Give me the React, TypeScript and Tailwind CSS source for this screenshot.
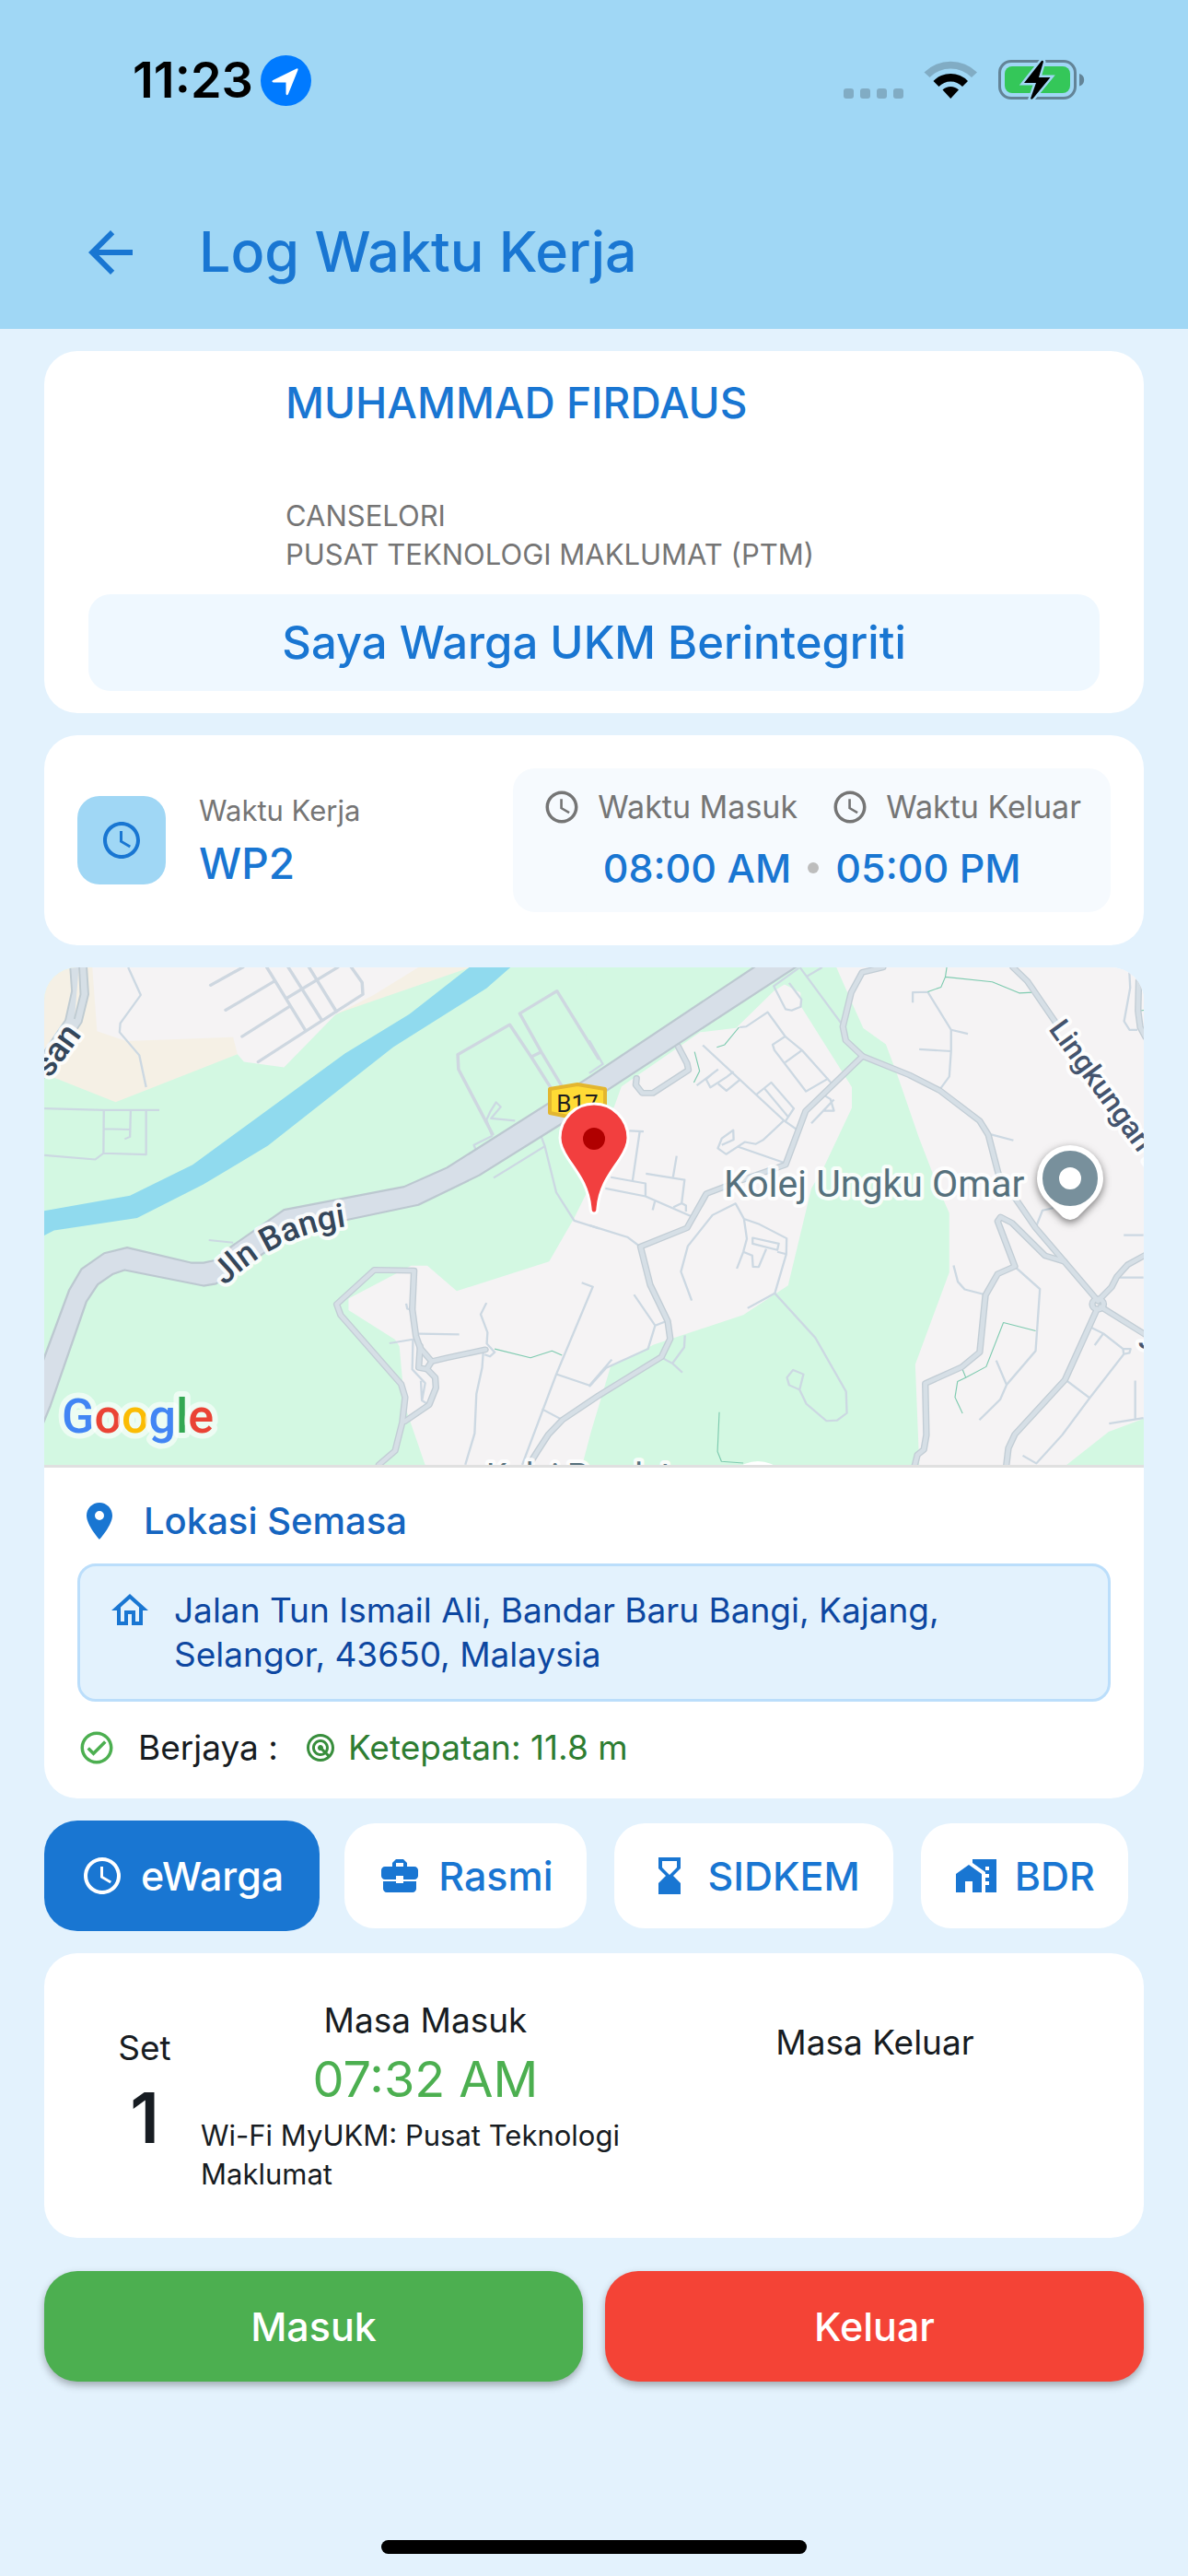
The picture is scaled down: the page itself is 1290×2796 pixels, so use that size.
import { useState } from "react";
import type { ReactNode } from "react";
import {
  MdAccessTime,
  MdArrowBack,
  MdBusinessCenter,
  MdHomeWork,
  MdHourglassBottom,
  MdLocationOn,
  MdOutlineCheckCircle,
  MdOutlineHome,
  MdRadar,
} from "react-icons/md";

const tabs = [
  { id: "ewarga", label: "eWarga", Icon: MdAccessTime },
  { id: "rasmi", label: "Rasmi", Icon: MdBusinessCenter },
  { id: "sidkem", label: "SIDKEM", Icon: MdHourglassBottom },
  { id: "bdr", label: "BDR", Icon: MdHomeWork },
];

// Road geometry, in map units. The east sheet starts 1542 units to the right.
const westLanes = [
  "M255 28 290 112 233 198 231 225 286 295 305 392",
  "M21 457 186 462 342 462",
  "M187 462 186 593 163 612 21 599M186 593 305 597 305 462M187 519 260 521M262 462 260 543 245 550",
  "M1270 538 1255 492 1265 468 1282 438 1295 452 1268 487 1335 494",
  "M1275 668 1418 572M1408 542 1418 572 1450 712 1500 798 1570 822",
  "M1226 585 1220 568 1272 540",
  "M480 857 548 865",
  "M1031 1050 1034 1066 1048 1070M984 1171 1050 1159 1048 1250 1084 1292 1075 1345 1090 1355M1072 1285 1075 1345",
  "M1066 1142 1179 1144",
  "M1255 1048 1239 1083 1258 1138 1256 1172 1278 1198 1265 1211 1250 1205M1246 1200 1243 1245 1227 1325 1222 1445 1196 1540",
  "M1521 987 1552 999 1450 1265 1355 1540M1450 1265 1543 1299 1605 1220",
  "M1410 1371 1462 1401",
];

const westStreets = [
  "M485 82 575 28M527 158 663 70M573 238 705 147M618 315 910 110 908 74 878 28",
  "M642 28 750 220M702 28 795 188M760 28 836 162M700 120 840 28",
  "M1438 400 1380 300 1408 285 1348 168 1452 100 1568 305M1380 300 1320 202 1175 293 1177 338 1272 535M1408 285 1466 390",
];

const eastLanes = [
  "M0 250 38 322 0 350",
  "M588 28 708 205M608 55 650 28M585 30 515 85 548 155 565 159 590 148 592 125 558 75",
  "M420 210 438 208 498 164 547 238 512 263 517 280 605 405 668 365M547 238 594 280 676 380M547 317 594 280",
  "M317 265 545 495 578 520M468 413 508 378 571 457 548 495M489 396 555 482",
  "M300 387 360 338M326 368 338 393 385 360M360 382 383 403 420 370M326 368 345 350M385 360 403 345",
  "M620 502 683 430M656 417 673 428 683 464 652 464",
  "M542 495 485 553 465 565 434 559 382 596 359 578 370 548 402 523 403 552 370 568M414 573 542 621",
  "M112 525 152 527M141 527 121 676M60 666 157 685 157 724M45 700 157 724 285 785M158 655 266 674 258 745 270 752 270 770M244 601 234 665M183 740 177 766M235 757 258 745",
  "M0 812 108 849 142 877",
  "M410 745 344 781 275 876 256 953 286 1041M408 745 432 793 440 853 430 893 412 944M432 793 475 809 551 852 550 900 518 1019 442 1064M430 893 455 904 457 938 473 939 494 884M456 850 529 868 525 887 456 868zM525 893 550 900",
  "M125 1023 184 1117 164 1188 47 1246 0 1303M184 1117 217 1103",
  "M518 1019 631 1154 717 1318 719 1383 692 1405 662 1407 606 1355 587 1312 598 1265 569 1252 552 1275 558 1298 587 1312",
  "M267 1147 265 1183 232 1232M205 1216 232 1232 260 1260",
  "M903 135 903 104 945 103 1010 218 1010 283 1005 360 980 397M1010 218 1057 230M921 277 1010 283",
  "M1122 536 1184 554",
  "M1246 820 1265 767 1295 760M1017 934 1029 984 1048 1007 1105 1023M1188 938 1258 1006 1246 1194 1165 1297 1147 1342 1089 1404M1136 1223 1165 1297",
  "M1492 842 1547 842M1480 971 1547 971",
  "M1403 1124 1435 1141 1490 1188 1511 1188 1508 1200 1492 1204 1490 1188M1435 1141 1411 1177M1492 1204 1397 1337 1320 1450 1248 1536 1210 1512M1332 1284 1397 1337M1524 1284 1524 1400M1451 1415 1547 1398",
  "M1507 28 1510 90 1493 192 1508 218 1530 218",
];

const trails = [
  "M1278 1188 1378 1215 1438 1194 1466 1207",
  "M1898 271 1920 263 1960 210M1836 285 1850 343 1834 378",
  "M2487 102 2524 88 2536 57 2540 28M2536 57 2667 72 2742 106 2780 104",
  "M2788 1133 2698 1108 2650 1242 2593 1275 2583 1248M2593 1275 2570 1287 2563 1335 2584 1384",
  "M1905 1380 1900 1500 1911 1530 1972 1535",
  "M3078 160 3090 158",
];

const mainStreets = [
  "M955 1540 1000 1498 1020 1412 1028 1335 1017 1295 848 1085 837 1052 942 948 1053 950 1048 1068 1058 1148 1070 1185 1102 1226 1145 1215 1252 1190",
  "M1070 1180 1066 1245 1090 1250 1112 1275 1114 1306 1095 1358 1028 1408M1102 1226 1088 1250",
  "M1380 1530 1397 1500 1428 1448 1468 1403 1568 1330 1744 1212 1768 1157 1761 1103 1712 993 1685 877 1815 820 1869 716 1980 670 2090 628 2146 465 2305 298",
  "M2362 28 2304 43 2273 105 2250 208 2258 250 2305 298 2435 355 2520 402 2632 495 2656 537 2684 655 2788 820 2868 922 2962 1042",
  "M2868 922 2815 905 2722 805 2690 787 2682 800 2730 937 2682 960 2648 1025 2632 1198 2582 1243 2480 1293 2483 1450 2476 1494 2458 1510 2450 1545",
  "M2725 28 2765 70 2850 205",
  "M2962 1042 3000 1000 3015 968 3045 932 3095 902M2970 1060 3095 1145M2960 1066 2870 1282 2730 1448 2712 1490 2706 1545",
  "M2962 1036a14 14 0 0 1 0 32a14 14 0 0 1 0 -32",
  "M3076 65 3074 160 3080 210 3095 240",
  "M1674 365 1672 385 1690 410 1720 410 1819 340 1815 320 1790 268",
];

function LocationMap() {
  return (
    <svg
      viewBox="0 0 1194 540"
      preserveAspectRatio="xMidYMid slice"
      className="block h-[540px] w-full bg-[#f5f3f4]"
      role="img"
      aria-label="Peta lokasi semasa"
    >
      <g transform="translate(-8 -10) scale(0.389 0.357)" fill="none" strokeLinejoin="round">
        <path fill="#d3f8e2" d="M0 0H1600V1560H0z" />
        <path fill="#f5f0e5" d="M0 0H1290L1210 28 860 160 560 292 220 438 60 368 0 345z" />
        <path
          fill="#f5f3f4"
          d="M153 0H1110L1065 28 940 112 835 170 690 332 578 315 560 292 548 240 250 252 168 222z"
        />
        <path
          fill="#f5f3f4"
          d="M1568 640 1500 790 1430 922 1172 1012 1090 935 1045 935 870 1035 870 1070 1000 1160 1012 1180 1022 1300 1030 1370 1090 1560H1520L1568 1370 1610 1240V500z"
        />
        <g transform="translate(1542 0)">
          <path fill="#f5f3f4" d="M68 0H1600V1560H68z" />
          <path
            fill="#d3f8e2"
            d="M-10 0H680L690 28 735 140 765 213 828 262 860 355 920 545 975 700 1005 775 1005 955 910 1235 922 1560H-24L5 1440 60 1240 180 1175 430 1085 555 995 620 700 655 635 733 455 733 392 590 145 590 105 545 80 515 100 410 212 310 225 90 390 70 450 0 600z"
          />
          <path fill="#d3f8e2" d="M1310 1560 1450 1440 1560 1395V1560z" />
        </g>
        <path
          fill="#90daee"
          d="M0 772 260 722 435 628 860 290 1040 170 1240 0H1350L1322 28 1255 92 995 270 645 570 465 688 280 790 48 828 0 855z"
        />
        <g stroke="#ccd8e2" strokeWidth="6">
          {westLanes.map((d) => (
            <path key={d} d={d} />
          ))}
          <g transform="translate(1542 0)">
            {eastLanes.map((d) => (
              <path key={d} d={d} />
            ))}
          </g>
        </g>
        <g stroke="#ced7e0" strokeWidth="9" strokeLinecap="round">
          {westStreets.map((d) => (
            <path key={d} d={d} />
          ))}
        </g>
        <g stroke="#7fcbb0" strokeWidth="3">
          {trails.map((d) => (
            <path key={d} d={d} />
          ))}
        </g>
        <g stroke="#c2cdd5" strokeWidth="19" strokeLinecap="round">
          {mainStreets.map((d) => (
            <path key={d} d={d} />
          ))}
        </g>
        <g stroke="#d6dfe6" strokeWidth="12" strokeLinecap="round">
          {mainStreets.map((d) => (
            <path key={d} d={d} />
          ))}
        </g>
        <path
          fill="#d6dfe6"
          stroke="#bfcbd2"
          strokeWidth="5"
          d="M92 10 98 100 80 188 10 300V380L125 195 144 110 138 10zM118 20 122 110 105 185"
        />
        <path
          fill="#d7dfe8"
          stroke="#bcc8d0"
          strokeWidth="6"
          d="M0 1275 90 1010 125 945 188 897 252 880 430 926 465 926 500 918 545 875 690 765 1025 695 1145 637 1430 440 1542 362 2040 0H2157L1587 405 1470 500 1235 660 1065 750 860 797 720 830 610 915 500 990 465 996 245 948 213 960 170 992 138 1045 38 1360 0 1460z"
        />
      </g>

      {/* Place and street names */}
      <g
        fontFamily="Roboto, sans-serif"
        fontWeight="500"
        stroke="#ffffff"
        strokeOpacity="0.85"
        strokeWidth="8"
        strokeLinejoin="round"
        paintOrder="stroke"
      >
        <path id="jalan-bangi" d="M196 346Q250 292 322 282L360 276" fill="none" stroke="none" />
        <text fontSize="36" fill="#34465a">
          <textPath href="#jalan-bangi">Jln Bangi</textPath>
        </text>
        <text fontSize="37" fill="#34465a" transform="translate(6 121) rotate(-54)">
          san
        </text>
        <text fontSize="32" fill="#44546e" transform="translate(1090 67) rotate(54)">
          Lingkungan Ilmu
        </text>
        <text fontSize="41" fontWeight="400" fill="#55707c" x="738" y="249">
          Kolej Ungku Omar
        </text>
        <text fontSize="36" fontWeight="400" fill="#55707c" x="480" y="564">
          Kolej Pendeta
        </text>
        <text fontSize="32" fill="#44546e" x="1188" y="414">
          J
        </text>
      </g>

      <circle cx="775" cy="572" r="36" fill="#ffffff" />
      <g className="drop-shadow-[0_3px_4px_rgba(0,0,0,0.5)]">
        <path
          fill="#ffffff"
          d="M1114 193a36 36 0 0 1 36 36c0 9-4 17-9 23l-19 19q-8 6-16 0l-19-19c-5-6-9-14-9-23a36 36 0 0 1 36-36z"
        />
      </g>
      <circle cx="1114" cy="229" r="21" fill="none" stroke="#78909c" strokeWidth="18" />

      <path
        d="M549 132 579 127 609 132V158L579 164 549 158z"
        fill="#ffdb35"
        stroke="#e3b62f"
        strokeWidth="4"
        strokeLinejoin="round"
      />
      <text x="579" y="157" textAnchor="middle" fontFamily="Roboto, sans-serif" fontSize="26" fill="#1f1f1f">
        B17
      </text>
      <path
        d="M597 267c-3 0-4-3-4-6-2-24-14-38-24-53-6-9-9-16-9-23a37 37 0 0 1 74 0c0 7-3 14-9 23-10 15-22 29-24 53 0 3-1 6-4 6z"
        fill="#f23f3f"
        stroke="#ffffff"
        strokeWidth="3"
      />
      <circle cx="597" cy="186" r="12" fill="#b00000" />

      <text
        x="19"
        y="505"
        fontFamily="Roboto, sans-serif"
        fontSize="52"
        fontWeight="500"
        stroke="#ffffff"
        strokeOpacity="0.6"
        strokeWidth="12"
        strokeLinejoin="round"
        paintOrder="stroke"
      >
        <tspan fill="#4285f4">G</tspan>
        <tspan fill="#ea4335">o</tspan>
        <tspan fill="#fbbc04">o</tspan>
        <tspan fill="#4285f4">g</tspan>
        <tspan fill="#34a853">l</tspan>
        <tspan fill="#ea4335">e</tspan>
      </text>
    </svg>
  );
}

function StatusBar() {
  return (
    <div className="flex h-[174px] items-center justify-between pr-[112px] pl-36">
      <div className="flex items-center gap-2">
        <span className="text-[54px] leading-none font-semibold text-black">11:23</span>
        <svg viewBox="0 0 55 55" className="size-[55px]" aria-hidden="true">
          <circle cx="27.5" cy="27.5" r="27.5" fill="#007aff" />
          <path
            d="M39 14.5Q41 13.500 40.500 16L30 42q-1.500 2.500-2.500 0V29.500H14q-3-.8-.5-2.500z"
            fill="#ffffff"
          />
        </svg>
      </div>
      <svg viewBox="0 0 262 46" className="h-[46px] w-[262px]" aria-hidden="true">
        <g fill="#81acc4">
          <rect x="0" y="32" width="11" height="11" rx="3" />
          <rect x="18" y="32" width="11" height="11" rx="3" />
          <rect x="36" y="32" width="11" height="11" rx="3" />
          <rect x="54" y="32" width="11" height="11" rx="3" />
        </g>
        <path d="M87.500 14.500a41 41 0 0 1 57.500 0l-6 5.500a32 32 0 0 0-45.500 0z" fill="#81acc4" />
        <path d="M97.500 24a26 26 0 0 1 37.500 0l-6 6a17.500 17.500 0 0 0-25.500 0z" fill="#000" />
        <path d="M107.500 33.500a12.500 12.500 0 0 1 17.500 0l-8.750 9.500z" fill="#000" />
        <rect x="169.500" y="2.500" width="82" height="40" rx="12.500" fill="none" stroke="#638497" strokeWidth="3" />
        <rect x="175" y="8" width="71" height="29" rx="8" fill="#34c759" />
        <path d="M256 16a7 7 0 0 1 0 13.500z" fill="#638497" />
        <path
          d="M215 2 196 26h13l-6 17q1.500 1.500 3-.5L224.500 20H212l5-17q-.5-2-2-1z"
          fill="#000"
          stroke="#a0d7f5"
          strokeWidth="5"
          paintOrder="stroke"
        />
      </svg>
    </div>
  );
}

function Card({ className = "", children }: { className?: string; children: ReactNode }) {
  return <section className={`overflow-hidden rounded-[36px] bg-white ${className}`}>{children}</section>;
}

export default function App() {
  const [activeTab, setActiveTab] = useState("ewarga");

  return (
    <div className="flex min-h-screen flex-col bg-[#e3f2fd] font-['Inter',sans-serif] text-[#171c22]">
      <header className="bg-[#a0d7f5]">
        <StatusBar />
        <div className="flex h-[183px] items-center gap-[60px] px-[84px] pt-4 text-[#1976d2]">
          <button type="button" aria-label="Kembali">
            <MdArrowBack className="size-[72px]" />
          </button>
          <h1 className="text-[61px] leading-none font-medium">Log Waktu Kerja</h1>
        </div>
      </header>

      <main className="flex flex-1 flex-col gap-6 px-12 pt-6">
        <Card className="px-12 py-6">
          <div className="pl-[214px]">
            <h2 className="text-[46px] leading-[64px] font-medium text-[#1976d2]">MUHAMMAD FIRDAUS</h2>
            <p className="mt-[70px] text-[31px] leading-[42px] text-[#757575]">
              CANSELORI
              <br />
              PUSAT TEKNOLOGI MAKLUMAT (PTM)
            </p>
          </div>
          <p className="mt-[22px] rounded-3xl bg-[#eff8ff] text-center text-[49px] leading-[105px] font-medium text-[#1976d2]">
            Saya Warga UKM Berintegriti
          </p>
        </Card>

        <Card className="flex items-center px-9 py-9">
          <div className="flex size-24 items-center justify-center rounded-3xl bg-[#a0d7f5]">
            <MdAccessTime className="size-12 text-[#1976d2]" />
          </div>
          <div className="ml-9 pt-2">
            <p className="text-[31px] leading-[42px] text-[#757575]">Waktu Kerja</p>
            <p className="text-[46px] leading-[72px] font-medium text-[#1976d2]">WP2</p>
          </div>
          <div className="ml-auto rounded-3xl bg-[#f6fafe] px-8 pt-[18px] pb-3">
            <div className="flex gap-9 text-[34px] leading-[48px] text-[#757575]">
              <p className="flex items-center gap-[18px]">
                <MdAccessTime className="size-[42px]" />
                Waktu Masuk
              </p>
              <p className="flex items-center gap-[18px]">
                <MdAccessTime className="size-[42px]" />
                Waktu Keluar
              </p>
            </div>
            <div className="mt-[6px] flex items-center justify-center gap-[18px] text-[43px] leading-[72px] font-medium text-[#1976d2]">
              <span>08:00 AM</span>
              <span className="size-3 rounded-full bg-[#bdbdbd]" />
              <span>05:00 PM</span>
            </div>
          </div>
        </Card>

        <Card>
          <LocationMap />
          <div className="border-t-3 border-[#e0e0e0] px-9 pt-8 pb-[31px]">
            <h2 className="flex items-center gap-6 text-[40px] leading-[52px] font-medium text-[#1565c0]">
              <MdLocationOn className="size-12 text-[#1976d2]" />
              Lokasi Semasa
            </h2>
            <div className="mt-5 flex items-start gap-6 rounded-[20px] border-3 border-[#bbdefb] bg-[#e3f2fd] px-[30px] py-6 text-[#0d47a1]">
              <MdOutlineHome className="size-12 text-[#1976d2]" />
              <p className="w-[900px] text-[37px] leading-[48px]">
                Jalan Tun Ismail Ali, Bandar Baru Bangi, Kajang, Selangor, 43650, Malaysia
              </p>
            </div>
            <div className="mt-[26px] flex items-center text-[37px] leading-[48px]">
              <MdOutlineCheckCircle className="size-[42px] text-[#4caf50]" />
              <span className="ml-6">Berjaya :</span>
              <MdRadar className="ml-7 size-9 text-[#388e3c]" />
              <span className="ml-3 text-[#2e7d32]">Ketepatan: 11.8 m</span>
            </div>
          </div>
        </Card>

        <nav className="flex items-center gap-6">
          {tabs.map(({ id, label, Icon }) => (
            <button
              key={id}
              type="button"
              aria-pressed={activeTab === id}
              onClick={() => setActiveTab(id)}
              className={
                activeTab === id
                  ? "flex h-[120px] items-center gap-[18px] rounded-[36px] bg-[#1976d2] px-[39px] text-[43px] font-medium text-white"
                  : "m-[3px] flex h-[114px] items-center gap-[18px] rounded-[33px] bg-white px-9 text-[43px] font-medium text-[#1976d2]"
              }
            >
              <Icon className="size-12" />
              {label}
            </button>
          ))}
        </nav>

        <Card className="grid h-[309px] grid-cols-[1fr_4fr_4fr] items-center px-12">
          <div className="text-center">
            <p className="text-[37px] leading-[48px]">Set</p>
            <p className="text-[75px] leading-[104px] font-semibold">1</p>
          </div>
          <div>
            <p className="text-center text-[37px] leading-[48px]">Masa Masuk</p>
            <p className="text-center text-[54px] leading-[80px] text-[#4caf50]">07:32 AM</p>
            <p className="text-[31px] leading-[42px]">
              Wi-Fi MyUKM: Pusat Teknologi
              <br />
              Maklumat
            </p>
          </div>
          <div className="min-h-[164px] text-center">
            <p className="text-[37px] leading-[48px]">Masa Keluar</p>
          </div>
        </Card>

        <div className="mt-3 grid grid-cols-2 gap-6 text-[43px] font-medium text-white">
          <button
            type="button"
            className="h-[120px] rounded-[36px] bg-[#4caf50] shadow-[0_4px_8px_rgba(0,0,0,0.3)]"
          >
            Masuk
          </button>
          <button
            type="button"
            className="h-[120px] rounded-[36px] bg-[#f44336] shadow-[0_4px_8px_rgba(0,0,0,0.3)]"
          >
            Keluar
          </button>
        </div>

        <div className="mx-auto mt-auto mb-6 h-[15px] w-[462px] rounded-full bg-black" />
      </main>
    </div>
  );
}
